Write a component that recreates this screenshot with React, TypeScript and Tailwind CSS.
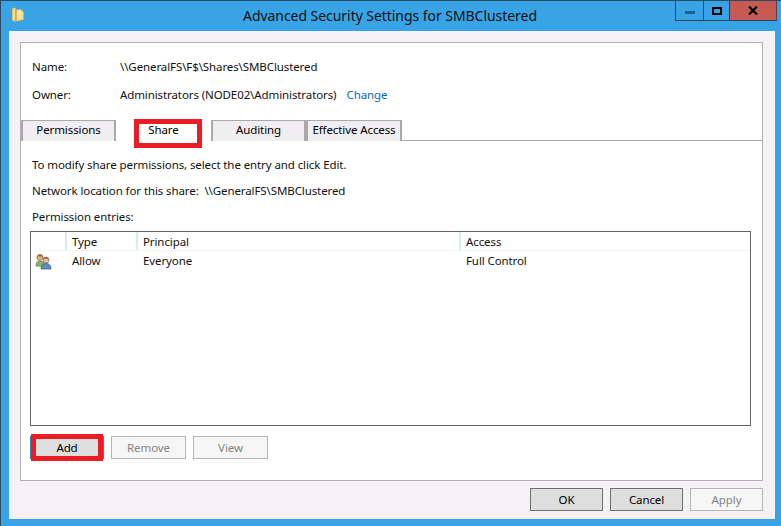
import React from "react";

const Folder = () => (
  <svg width="12" height="16" viewBox="0 0 12 16" className="block">
    <path d="M0 1.5 L3 0.5 L4 1.5 L4 15 L1 14 L0 13 Z" fill="#e3c05c" />
    <path d="M1 2 L3 1.5 L3 13.5 L1 13 Z" fill="#f4e199" />
    <path d="M4 2.5 L9 2.5 L11.5 5 L11.5 12.5 L4 14.5 Z" fill="#f2d67e" />
    <path d="M5 3.5 L8.5 3.5 L10.5 5.5 L10.5 11.5 L5 13 Z" fill="#f7e4a4" />
    <path d="M4 2 L4 15" stroke="#b8953a" strokeWidth="1" />
  </svg>
);

const Users = () => (
  <svg width="17" height="17" viewBox="0 0 17 17" className="block">
    <circle cx="5" cy="4.5" r="3" fill="#e3b38a" stroke="#a8794f" strokeWidth="0.8" />
    <path d="M2 3 Q5 -0.5 8 3 L8.5 6 L7 3.5 L3 3.5 L1.5 6 Z" fill="#a56a3a" />
    <path d="M1 13 Q1 8 5 8 Q9 8 9 12 L9 13 Z" fill="#8cb56a" stroke="#5f8546" strokeWidth="0.8" />
    <circle cx="11" cy="7" r="3" fill="#e8c09c" stroke="#8a7060" strokeWidth="0.8" />
    <path d="M8.5 6 Q11 3 13.5 6 L11 5.5 Z" fill="#4a3a30" />
    <path d="M6 16 Q6 10.5 11 10.5 Q16 10.5 16 16 Z" fill="#5f8db8" stroke="#3c6288" strokeWidth="0.8" />
  </svg>
);

const Tab = ({ label, w, active }: { label: string; w: string; active?: boolean }) => (
  <div
    className={
      active
        ? `${w} h-[22px] flex items-center justify-center bg-white text-black`
        : `${w} h-[21px] mt-px pb-[2px] flex items-center justify-center bg-[#f0eef0] border-l-2 border-r-2 border-t border-[#a9a9a9] text-black`
    }
  >
    {label}
  </div>
);

const Btn = ({ label, w, disabled, focus }: { label: string; w: string; disabled?: boolean; focus?: boolean }) => (
  <div
    className={
      disabled
        ? `${w} h-[23px] flex items-center justify-center border border-[#b5b5b5] bg-[#f6f6f6] text-[#838383]`
        : focus
          ? `${w} h-[23px] flex items-center justify-center border border-[#3a7fb8] bg-[#dedede] text-black`
          : `${w} h-[23px] flex items-center justify-center border border-[#6f6f6f] bg-[#dedede] text-black`
    }
  >
    {label}
  </div>
);

export default function App() {
  return (
    <div className="relative w-[781px] h-[526px] overflow-hidden bg-[#38a4e6] border-t border-l border-[#2b4a60] flex flex-col text-[11.5px] tracking-[-0.1px] leading-none text-[#111] font-['Noto_Sans','Open_Sans',sans-serif]">
      {/* Title bar */}
      <div className="h-[30px] flex items-start shrink-0">
        <div className="ml-[11px] mt-[6px]">
          <Folder />
        </div>
        <div className="ml-[219px] mt-[8px] text-[14px] tracking-[-0.05px] text-[#101010] whitespace-nowrap">
          Advanced Security Settings for SMBClustered
        </div>
        <div className="ml-auto mr-[4px] flex h-[21px] border-b border-[#1d4560] -mt-px">
          <div className="w-[29px] border-l border-r border-[#1d4560] flex items-start justify-center pt-[11px]">
            <div className="w-[10px] h-[3px] bg-[#1c5f90]" />
          </div>
          <div className="w-[26px] border-r border-[#1d4560] flex items-start justify-center pt-[7px]">
            <div className="w-[10px] h-[8px] border-2 border-black" />
          </div>
          <div className="w-[47px] bg-[#c75b53] border-r border-[#5c3d45] flex items-start justify-center pt-[6px]">
            <svg width="10" height="9" viewBox="0 0 10 9" className="block">
              <path d="M1 0.5 L9 8.5 M9 0.5 L1 8.5" stroke="#000" strokeWidth="2.2" />
            </svg>
          </div>
        </div>
      </div>

      {/* Dialog client */}
      <div className="ml-[8px] mr-[6px] h-[488px] bg-[#f5f1f5] pt-[11px] px-[11px] flex flex-col">
        <div className="h-[439px] w-[743px] bg-white border border-[#b4b1b4] flex flex-col">
          {/* Name / owner */}
          <div className="pt-[18px] pl-[11px] h-[76px] shrink-0">
            <div className="flex items-center h-[12px]">
              <div className="w-[88px]">Name:</div>
              <div>\\GeneralFS\F$\Shares\SMBClustered</div>
            </div>
            <div className="flex items-center h-[12px] mt-[16px]">
              <div className="w-[88px]">Owner:</div>
              <div>Administrators (NODE02\Administrators)</div>
              <div className="ml-[10px] text-[#0e63c4]">Change</div>
            </div>
          </div>

          {/* Tabs */}
          <div className="flex h-[22px] border-b border-[#a9a9a9] shrink-0">
            <Tab label="Permissions" w="w-[95px]" />
            <Tab label="Share" w="w-[95px]" active />
            <Tab label="Auditing" w="w-[95px]" />
            <Tab label="Effective Access" w="w-[96px]" />
          </div>

          {/* Share page */}
          <div className="pl-[11px] pr-[11px] flex-1 flex flex-col">
            <div className="mt-[18px] h-[12px] flex items-center">To modify share permissions, select the entry and click Edit.</div>
            <div className="mt-[14px] h-[12px] flex items-center">
              Network location for this share:&nbsp; \\GeneralFS\SMBClustered
            </div>
            <div className="mt-[14px] h-[12px] flex items-center">Permission entries:</div>

            <div className="mt-[8px] -ml-[2px] w-[721px] h-[195px] border border-[#646464] bg-white flex flex-col">
              <div className="flex h-[19px] border-b border-[#eef3f8] items-center shrink-0">
                <div className="w-[36px] h-full border-r-2 border-[#dde9f5]" />
                <div className="w-[71px] h-full border-r-2 border-[#dde9f5] pl-[5px] pt-[1px] flex items-center">Type</div>
                <div className="w-[323px] h-full border-r-2 border-[#dde9f5] pl-[5px] pt-[1px] flex items-center">Principal</div>
                <div className="flex-1 pl-[5px] pt-[1px] flex items-center">Access</div>
              </div>
              <div className="flex h-[20px] items-center">
                <div className="w-[36px] pl-[4px]">
                  <Users />
                </div>
                <div className="w-[71px] pl-[5px]">Allow</div>
                <div className="w-[323px] pl-[5px]">Everyone</div>
                <div className="flex-1 pl-[5px]">Full Control</div>
              </div>
            </div>

            <div className="flex mt-[10px] gap-[7px] -ml-[2px]">
              <Btn label="Add" w="w-[74px]" focus />
              <Btn label="Remove" w="w-[75px]" disabled />
              <Btn label="View" w="w-[75px]" disabled />
            </div>
          </div>
        </div>

        {/* Footer buttons */}
        <div className="flex justify-end gap-[7px] mt-[7px] w-[743px]">
          <Btn label="OK" w="w-[73px]" />
          <Btn label="Cancel" w="w-[73px]" />
          <Btn label="Apply" w="w-[73px]" disabled />
        </div>
      </div>

      {/* Red annotation boxes */}
      <div className="absolute left-[133px] top-[118px] w-[68px] h-[29px] border-[5px] border-[#ed1c24]" />
      <div className="absolute left-[30px] top-[433px] w-[72px] h-[27px] border-[5px] border-[#ed1c24]" />
    </div>
  );
}
